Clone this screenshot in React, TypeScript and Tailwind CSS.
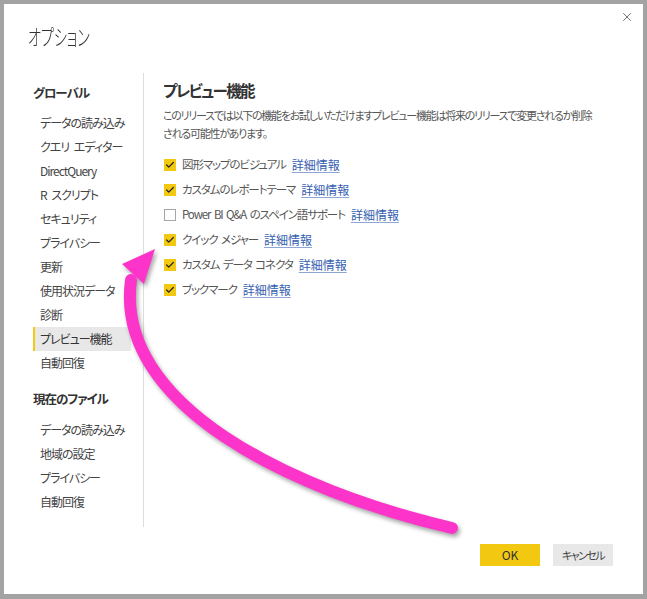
import { Check, X } from "lucide-react";

const globalItems = [
  "データの読み込み",
  "クエリ エディター",
  "DirectQuery",
  "R スクリプト",
  "セキュリティ",
  "プライバシー",
  "更新",
  "使用状況データ",
  "診断",
  "プレビュー機能",
  "自動回復",
];

const fileItems = ["データの読み込み", "地域の設定", "プライバシー", "自動回復"];

const features = [
  { label: "図形マップのビジュアル", checked: true },
  { label: "カスタムのレポートテーマ", checked: true },
  { label: "Power BI Q&A のスペイン語サポート", checked: false },
  { label: "クイック メジャー", checked: true },
  { label: "カスタム データ コネクタ", checked: true },
  { label: "ブックマーク", checked: true },
];

const NavItem = ({ label, active }: { label: string; active?: boolean }) => (
  <div
    className={
      active
        ? "flex h-[24px] items-center border-l-2 border-[#f2c811] bg-[#e8e8e8] pl-[5px] whitespace-pre text-[#333]"
        : "flex h-[24px] items-center pl-[7px] whitespace-pre text-[#444]"
    }
  >
    {label}
  </div>
);

const FeatureRow = ({ label, checked }: { label: string; checked: boolean }) => (
  <div className="flex h-[25px] items-center whitespace-nowrap">
    {checked ? (
      <span className="mr-[6px] ml-px grid h-[12px] w-[12px] place-items-center bg-[#f2c811]">
        <Check size={10} strokeWidth={3} className="text-[#252423]" />
      </span>
    ) : (
      <span className="mr-[6px] ml-px h-[12px] w-[12px] border border-[#a6a6a6] bg-white" />
    )}
    <span className="text-[11.5px] tracking-[-1.1px] text-[#555] [word-spacing:2px]">{label}</span>
    <a className="ml-[6px] text-[12px] text-[#3560b0] underline decoration-[#8ea6d6] underline-offset-2">詳細情報</a>
  </div>
);

export default function App() {
  return (
    <div className="relative h-[599px] w-[647px] bg-[#a3a3a3] pt-[4px] pr-[4px] pb-[5px] pl-[4px] font-['Noto_Sans_CJK_JP',sans-serif] text-[12px] [font-feature-settings:'palt']">
      <div className="relative h-full w-full bg-white">
        <X size={14} strokeWidth={1.4} className="absolute top-[6px] right-[9px] text-[#555]" />

        <div className="h-[69px] pt-[17px] pl-[24px] text-[22px] leading-[28px] font-light text-[#333]">
          <span className="inline-block origin-left scale-x-[0.64]">オプション</span>
        </div>

        <div className="flex h-[454px]">
          <nav className="w-[140px] border-r border-[#dedede] pt-[10px] pr-[12px] pl-[29px] tracking-[-1px] [word-spacing:3px]">
            <div className="h-[20px] text-[12.5px] leading-[20px] font-semibold text-[#333]">グローバル</div>
            <div className="mt-[8px]">
              {globalItems.map((item) => (
                <NavItem key={item} label={item} active={item === "プレビュー機能"} />
              ))}
            </div>
            <div className="mt-[14px] h-[20px] text-[12.5px] leading-[20px] font-semibold text-[#333]">
              現在のファイル
            </div>
            <div className="mt-[9px]">
              {fileItems.map((item) => (
                <NavItem key={item} label={item} />
              ))}
            </div>
          </nav>

          <section className="flex-1 pt-[6px] pl-[19px]">
            <h2 className="text-[15.5px] leading-[22px] font-semibold tracking-[-1.6px] text-[#333]">プレビュー機能</h2>
            <p className="mt-[5px] text-[11px] leading-[18px] tracking-[-1.25px] whitespace-nowrap text-[#555]">
              このリリースでは以下の機能をお試しいただけますプレビュー機能は将来のリリースで変更されるか削除
              <br />
              される可能性があります。
            </p>
            <div className="mt-[10px]">
              {features.map((f) => (
                <FeatureRow key={f.label} label={f.label} checked={f.checked} />
              ))}
            </div>
          </section>
        </div>

        <div className="mt-[17px] flex justify-end gap-[13px] pr-[30px]">
          <button className="h-[22px] w-[60px] bg-[#f2c811] text-[12px] text-[#333]">OK</button>
          <button className="h-[22px] w-[60px] bg-[#e8e8e8] text-[11px] tracking-[-1.5px] text-[#444]">キャンセル</button>
        </div>
      </div>

      <svg
        className="pointer-events-none absolute inset-0 [filter:drop-shadow(2px_3px_2px_rgba(0,0,0,0.35))]"
        width="647"
        height="599"
        viewBox="0 0 647 599"
      >
        <path
          d="M452 528 C 290 490, 114 405, 131 280"
          fill="none"
          stroke="#fd34c9"
          strokeWidth="12"
          strokeLinecap="round"
        />
        <polygon points="155,249 122,264 144,284" fill="#fd34c9" />
      </svg>
    </div>
  );
}
